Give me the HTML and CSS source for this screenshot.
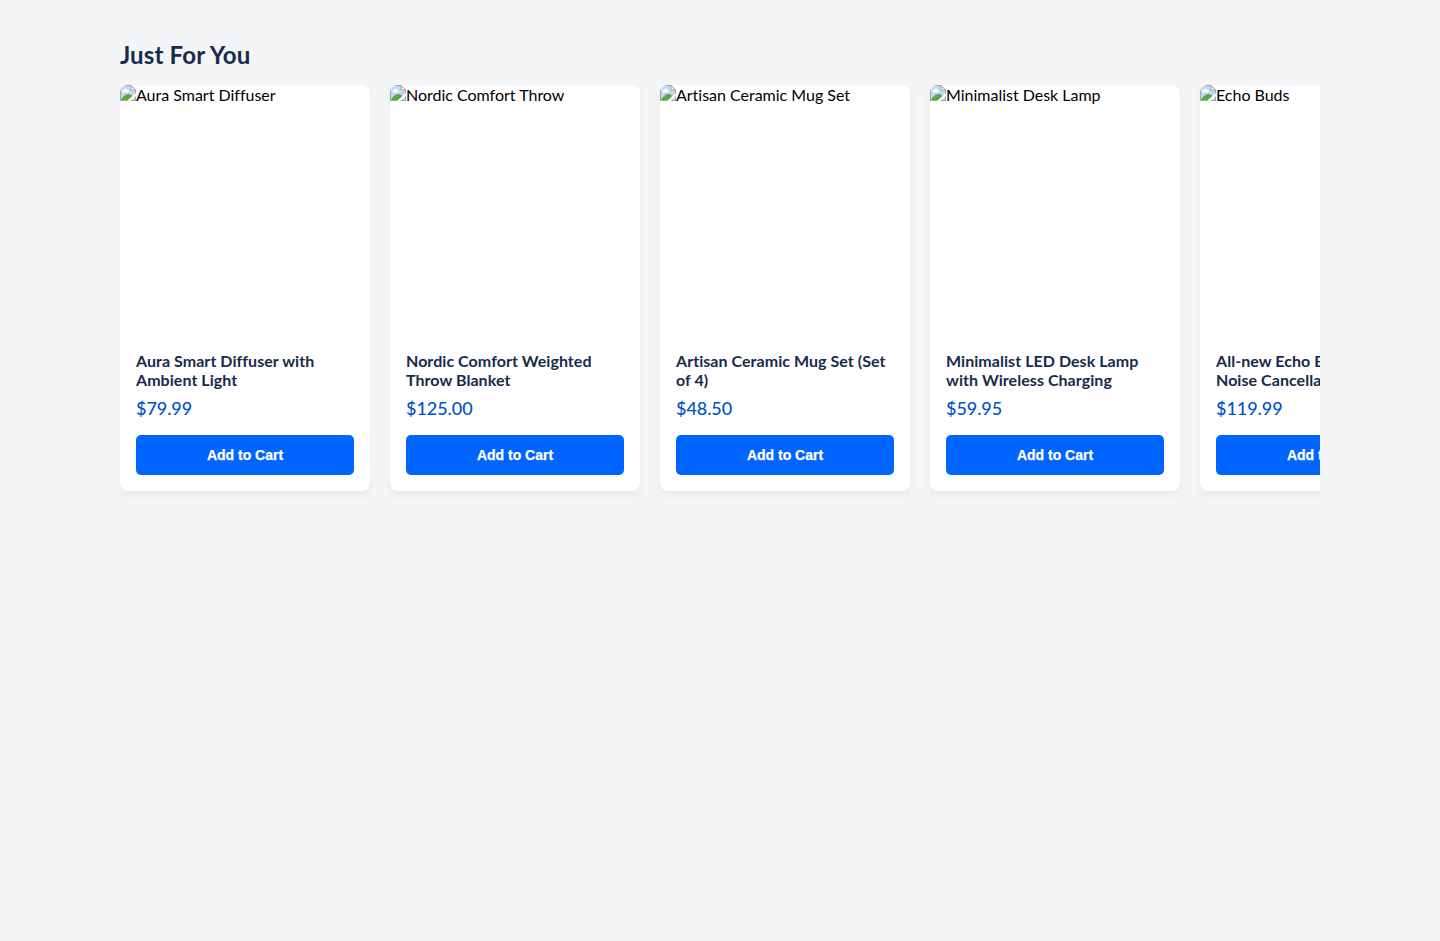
FILE: index.html
```html
<!DOCTYPE html>
<html lang="en">
<head>
<meta charset="utf-8">
<title>Just For You</title>
<link rel="stylesheet" href="styles.css">
</head>
<body>
<svg class="defs" width="0" height="0">
  <symbol id="picture" viewBox="0 0 16 16">
    <path d="M.5.5H11L15.5 5V15.5H.5z" fill="#c3d5f8"/>
    <path d="M3 7.500a1.600 1.600 0 0 1 1-2.800 2 2 0 0 1 3.700.3 1.400 1.400 0 0 1 .6 2.500z" fill="#fff"/>
    <path d="M1 15C3 11.500 5.500 9 8 9s3.500 1 4.500 2L8 15.500H1z" fill="#57ab3c"/>
    <path d="M.5 16V.5H11L15.500 5V16M0 15.500H16" fill="none" stroke="#a3a3a3"/>
    <path d="M11 .5V5h4.500z" fill="#fff" stroke="#a3a3a3"/>
    <path d="M16 8V11L10.500 16H7z" fill="#fff"/>
  </symbol>
</svg>
<main class="container">
  <h2 class="heading">Just For You</h2>
  <div class="carousel">
    <article class="card">
      <div class="media"><svg class="icon"><use href="#picture"/></svg><span>Aura Smart Diffuser</span></div>
      <div class="info">
        <h3 class="name">Aura Smart Diffuser with Ambient Light</h3>
        <p class="price">$79.99</p>
        <button class="add">Add to Cart</button>
      </div>
    </article>
    <article class="card">
      <div class="media"><svg class="icon"><use href="#picture"/></svg><span>Nordic Comfort Throw</span></div>
      <div class="info">
        <h3 class="name">Nordic Comfort Weighted Throw Blanket</h3>
        <p class="price">$125.00</p>
        <button class="add">Add to Cart</button>
      </div>
    </article>
    <article class="card">
      <div class="media"><svg class="icon"><use href="#picture"/></svg><span>Artisan Ceramic Mug Set</span></div>
      <div class="info">
        <h3 class="name">Artisan Ceramic Mug Set (Set of 4)</h3>
        <p class="price">$48.50</p>
        <button class="add">Add to Cart</button>
      </div>
    </article>
    <article class="card">
      <div class="media"><svg class="icon"><use href="#picture"/></svg><span>Minimalist Desk Lamp</span></div>
      <div class="info">
        <h3 class="name">Minimalist LED Desk Lamp with Wireless Charging</h3>
        <p class="price">$59.95</p>
        <button class="add">Add to Cart</button>
      </div>
    </article>
    <article class="card">
      <div class="media"><svg class="icon"><use href="#picture"/></svg><span>Echo Buds</span></div>
      <div class="info">
        <h3 class="name">All-new Echo Buds with<br>Noise Cancellation</h3>
        <p class="price">$119.99</p>
        <button class="add">Add to Cart</button>
      </div>
    </article>
  </div>
</main>
</body>
</html>
```
FILE: styles.css
```css
* { box-sizing: border-box; }
body {
  margin: 0;
  background: #f4f5f7;
  font-family: Lato, sans-serif;
}
.defs { display: block; }
.container {
  width: 1200px;
  margin: 0 auto;
  padding-top: 40px;
}
.heading {
  margin: 0 0 16px;
  font-size: 24px;
  line-height: 29px;
  font-weight: 700;
  letter-spacing: 0.15px;
  color: #172b4d;
}
.carousel {
  display: flex;
  gap: 20px;
  overflow: hidden;
  padding-bottom: 20px;
}
.card {
  flex: 0 0 250px;
  overflow: hidden;
  border-radius: 8px;
  background: #fff;
  box-shadow: 0 4px 8px rgba(0, 0, 0, 0.05);
}
.media {
  display: flex;
  height: 250px;
  font-size: 16px;
  line-height: 20px;
  letter-spacing: -0.01px;
  color: #000;
}
.icon { width: 16px; height: 16px; }
.info { padding: 16px; }
.name {
  margin: 0 0 8px;
  font-size: 16px;
  line-height: 19.2px;
  font-weight: 700;
  letter-spacing: 0.05px;
  color: #172b4d;
}
.price {
  margin: 0 0 15px;
  font-size: 18px;
  line-height: 22.6px;
  font-weight: 500;
  letter-spacing: -0.05px;
  color: #0052cc;
}
.add {
  display: block;
  width: 100%;
  height: 40px;
  padding: 0;
  border: 0;
  border-radius: 5px;
  background: #0065ff;
  color: #fff;
  font: 600 14px "Liberation Sans", Arial, sans-serif;
  -webkit-text-stroke: 0.25px #fff;
}
```
